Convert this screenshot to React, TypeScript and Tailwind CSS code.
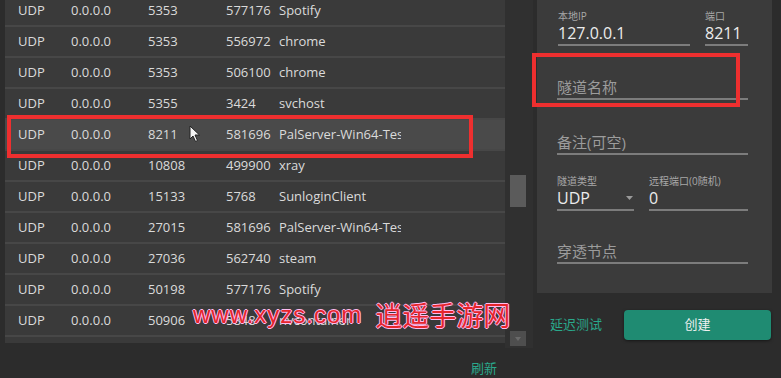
import React from 'react';

const rows = [
  ['5353', '577176', 'Spotify'],
  ['5353', '556972', 'chrome'],
  ['5353', '506100', 'chrome'],
  ['5355', '3424', 'svchost'],
  ['8211', '581696', 'PalServer-Win64-Test'],
  ['10808', '499900', 'xray'],
  ['15133', '5768', 'SunloginClient'],
  ['27015', '581696', 'PalServer-Win64-Test'],
  ['27036', '562740', 'steam'],
  ['50198', '577176', 'Spotify'],
  ['50906', '5848', 'nvcontainer'],
];

function Underline() {
  return <div className="h-[2px] bg-[#7c7c7c]" />;
}

function Field({ label, value, className = '' }: { label: string; value: string; className?: string }) {
  return (
    <div className={className}>
      <div className="text-[10px] leading-[14px] text-[#a8a8a8]">{label}</div>
      <div className="text-[16px] leading-[20px] text-[#ececec]">{value}</div>
      <div className="mt-[1px]">
        <Underline />
      </div>
    </div>
  );
}

function Placeholder({ text, className = '' }: { text: string; className?: string }) {
  return (
    <div className={className}>
      <div className="text-[15px] leading-[20px] text-[#9c9c9c]">{text}</div>
      <div className="mt-[1px]">
        <Underline />
      </div>
    </div>
  );
}

function Cursor() {
  return (
    <svg width="12" height="18" viewBox="0 0 12 18" className="absolute left-[184px] top-[125px]">
      <path d="M1 1 L1 14 L4 11 L6.5 16.5 L8.5 15.5 L6 10 L10.5 10 Z" fill="#f4f4f4" stroke="#222" strokeWidth="1" />
    </svg>
  );
}

export default function App() {
  return (
    <div className="relative w-[781px] h-[378px] overflow-hidden bg-[#2c2c2c] flex [font-family:'Open_Sans','Noto_Sans_CJK_SC',sans-serif]">
      {/* Left: port list */}
      <div className="w-[533px] flex flex-col">
        <div className="h-[348px] flex pl-[5px]">
          <div className="relative w-[500px] h-[343px] overflow-hidden bg-[#3a3a3a]">
            <div className="mt-[-4px]">
              {rows.map(([port, pid, name], i) => (
                <div
                  key={i}
                  className={
                    'h-[31px] flex items-center border-b-2 border-[#474747] text-[13px] text-[#dadada] ' +
                    (i === 4 ? 'bg-[#4a4a4a]' : '')
                  }
                >
                  <div className="w-[66px] pl-[13px]">UDP</div>
                  <div className="w-[77px]">0.0.0.0</div>
                  <div className="w-[78px]">{port}</div>
                  <div className="w-[53px]">{pid}</div>
                  <div className="w-[122px] overflow-hidden whitespace-nowrap">{name}</div>
                </div>
              ))}
            </div>
            <div className="absolute left-[2px] top-[115px] w-[466px] h-[43px] border-4 border-[#ee2f2f]" />
            <Cursor />
          </div>
          {/* scrollbar */}
          <div className="w-[28px] h-[348px] bg-[#303030] flex flex-col items-center pl-[3px] pr-[5px]">
            <div className="mt-[175px] w-[16px] h-[32px] bg-[#5b5b5b]" />
            <div className="flex-1" />
            <div className="mb-[2px] w-[16px] h-[15px] bg-[#4e4e4e] flex items-center justify-center">
              <svg width="6" height="4" viewBox="0 0 6 4">
                <path d="M0 0 L6 0 L3 4 Z" fill="#6a6a6a" />
              </svg>
            </div>
          </div>
        </div>
        <div className="flex justify-end pr-[36px] pt-[12px]">
          <span className="text-[13px] leading-[16px] text-[#2aa88b]">刷新</span>
        </div>
      </div>

      {/* Right: create tunnel form */}
      <div className="ml-[4px] w-[235px] flex flex-col">
        <div className="relative h-[293px] bg-[#3b3b3b] pl-[21px] pr-[24px] pt-[9px]">
          <div className="flex gap-[15px]">
            <Field label="本地IP" value="127.0.0.1" className="w-[132px]" />
            <Field label="端口" value="8211" className="flex-1" />
          </div>
          <Placeholder text="隧道名称" className="mt-[31px] -ml-[1px]" />
          <Placeholder text="备注(可空)" className="mt-[32px] -ml-[1px]" />
          <div className="mt-[19px] -ml-[1px] flex gap-[15px]">
            <div className="w-[77px]">
              <div className="text-[10px] leading-[14px] text-[#a8a8a8]">隧道类型</div>
              <div className="flex items-center justify-between pr-[1px]">
                <span className="text-[16px] leading-[20px] text-[#ececec]">UDP</span>
                <svg width="7" height="4" viewBox="0 0 7 4">
                  <path d="M0 0 L7 0 L3.5 4 Z" fill="#9a9a9a" />
                </svg>
              </div>
              <div className="mt-[1px]">
                <Underline />
              </div>
            </div>
            <Field label="远程端口(0随机)" value="0" className="flex-1" />
          </div>
          <Placeholder text="穿透节点" className="mt-[30px] -ml-[1px]" />
          <div className="absolute left-[-5px] top-[53px] w-[208px] h-[54px] border-4 border-[#ee2f2f]" />
        </div>
        <div className="mt-[17px] h-[30px] flex items-center justify-between pl-[13px] pr-[1px]">
          <span className="text-[13px] text-[#2aa88b]">延迟测试</span>
          <button className="w-[147px] h-[30px] rounded-[4px] bg-[#1f8b72] text-[13px] text-[#f0f0f0] shadow-[0_1px_3px_rgba(0,0,0,0.5)]">
            创建
          </button>
        </div>
      </div>

      {/* watermark */}
      <div className="absolute left-[193px] top-[298px] flex items-center gap-[13px] text-[#e5252b] [text-shadow:1px_0_#fbe,-1px_0_#fbe,0_1px_#fbe,0_-1px_#fbe]">
        <span className="text-[24px] leading-[32px] tracking-[1px] [font-family:'Liberation_Sans',sans-serif]">www.xyzs.com</span>
        <span className="text-[27px] leading-[34px] [font-family:'Noto_Sans_CJK_SC',sans-serif]">逍遥手游网</span>
      </div>
    </div>
  );
}
